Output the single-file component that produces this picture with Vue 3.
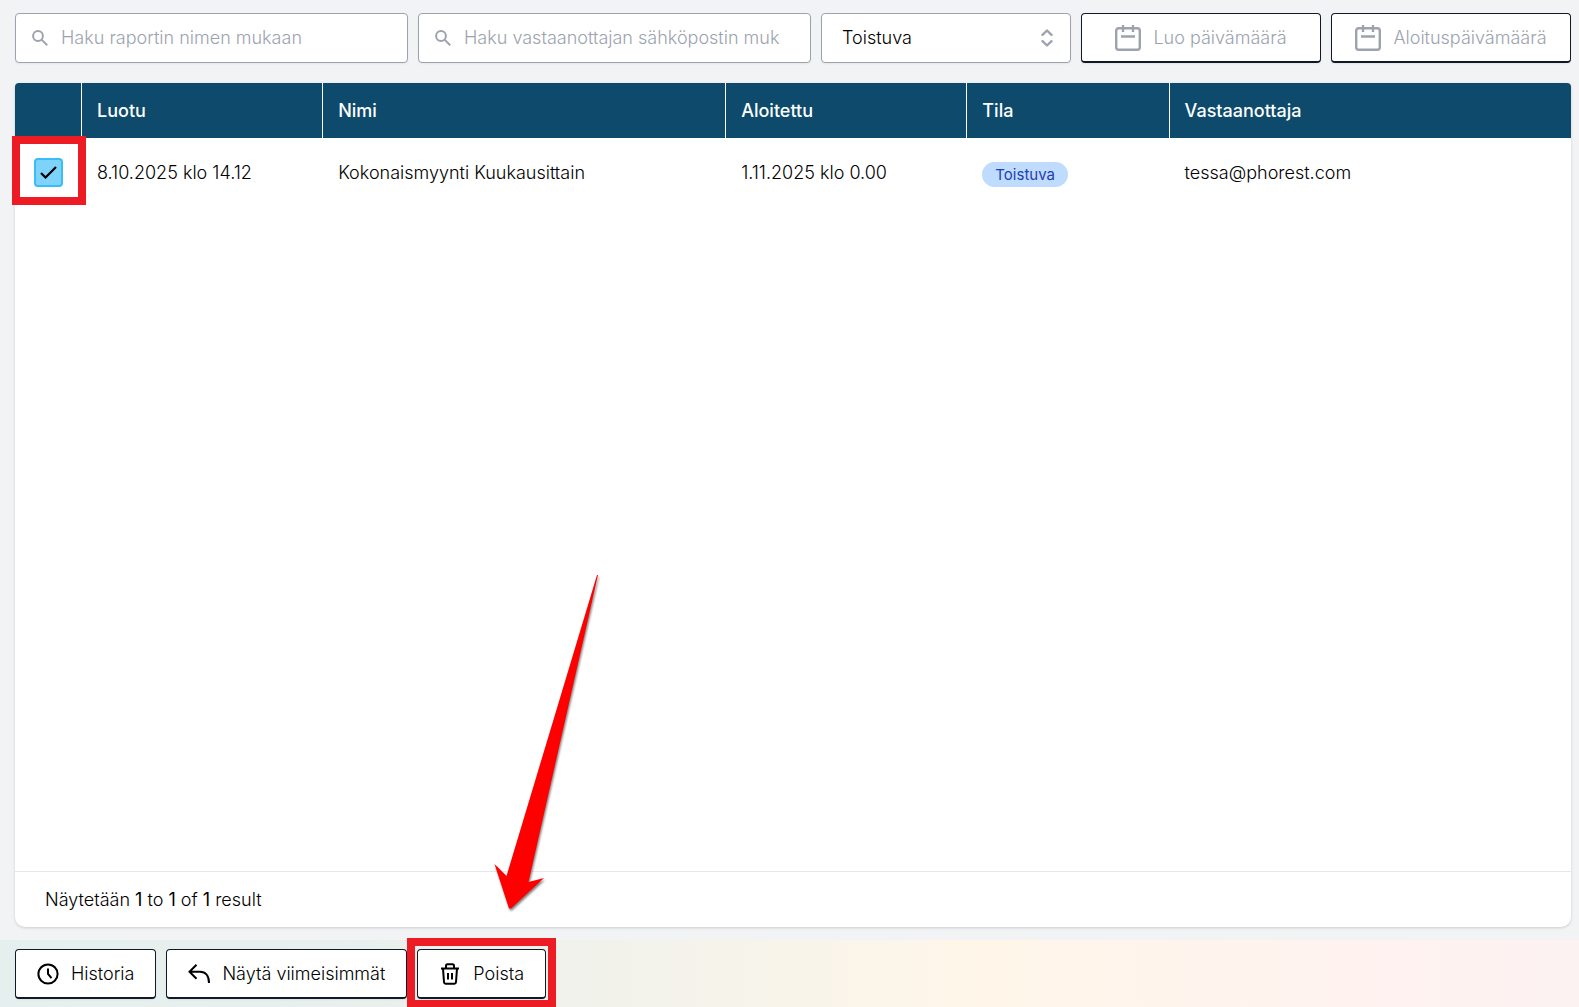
<script setup>
import { ref } from 'vue'

const nameQuery = ref('')
const emailQuery = ref('')
const status = ref('Toistuva')
const columns = ['Luotu', 'Nimi', 'Aloitettu', 'Tila', 'Vastaanottaja']
const rows = ref([
  {
    selected: true,
    created: '8.10.2025 klo 14.12',
    name: 'Kokonaismyynti Kuukausittain',
    started: '1.11.2025 klo 0.00',
    status: 'Toistuva',
    recipient: 'tessa@phorest.com',
  },
])
</script>

<template>
  <div class="page">
    <main class="content">
      <form class="filters" @submit.prevent>
        <label class="search">
          <svg class="search-icon" viewBox="0 0 16 16" aria-hidden="true">
            <circle cx="6" cy="6" r="4.9" />
            <path d="M9.6 9.6 15.2 15.2" />
          </svg>
          <input v-model="nameQuery" class="field" type="text" aria-label="Raportin nimi" placeholder="Haku raportin nimen mukaan" />
        </label>
        <label class="search">
          <svg class="search-icon" viewBox="0 0 16 16" aria-hidden="true">
            <circle cx="6" cy="6" r="4.9" />
            <path d="M9.6 9.6 15.2 15.2" />
          </svg>
          <input v-model="emailQuery" class="field" type="text" aria-label="Vastaanottajan sähköposti" placeholder="Haku vastaanottajan sähköpostin muk" />
        </label>
        <label class="select-wrap">
          <select v-model="status" class="field select" aria-label="Tila">
            <option>Toistuva</option>
          </select>
          <svg class="select-icon" viewBox="0 0 12 18" aria-hidden="true">
            <path d="M1.5 5.800 6 1.500l4.500 4.300M1.500 12.200 6 16.500l4.500-4.300" />
          </svg>
        </label>
        <button v-for="label in ['Luo päivämäärä', 'Aloituspäivämäärä']" :key="label" type="button" class="btn date">
          <svg class="calendar" viewBox="0 0 26 26" aria-hidden="true">
            <rect x="1.200" y="3.200" width="23.600" height="21.600" rx="2.500" />
            <path d="M8 0v7M18 0v7M6 11.500h14" />
          </svg>
          {{ label }}
        </button>
      </form>

      <section class="card">
        <table class="table">
          <thead>
            <tr>
              <th class="c-check"></th>
              <th v-for="(c, i) in columns" :key="c" :class="'c-' + i" scope="col">{{ c }}</th>
            </tr>
          </thead>
          <tbody>
            <tr v-for="row in rows" :key="row.name">
              <td class="check-cell">
                <span class="check">
                  <input v-model="row.selected" type="checkbox" :aria-label="row.name" />
                  <svg class="tick" viewBox="0 0 17 13" aria-hidden="true"><path d="M1 7 5.500 11.500 16 1" /></svg>
                  <span class="frame frame-check"></span>
                </span>
              </td>
              <td>{{ row.created }}</td>
              <td>{{ row.name }}</td>
              <td>{{ row.started }}</td>
              <td><span class="badge">{{ row.status }}</span></td>
              <td>{{ row.recipient }}</td>
            </tr>
          </tbody>
        </table>
        <p class="summary">Näytetään <b>1</b> to <b>1</b> of <b>1</b> result</p>
      </section>
    </main>

    <footer class="actions">
      <button type="button" class="btn">
        <svg class="icon" viewBox="0 0 22 22" aria-hidden="true">
          <circle cx="11" cy="11" r="9.600" />
          <path d="M11 5.500V11l3.500 4.200" />
        </svg>
        Historia
      </button>
      <button type="button" class="btn">
        <svg class="icon" viewBox="0 0 22 22" aria-hidden="true">
          <path d="M8.500 1.800 1.500 8.800l7 7M1.500 8.800H12c5.500 0 9 4 9 11.200" />
        </svg>
        Näytä viimeisimmät
      </button>
      <span class="marked">
        <button type="button" class="btn">
          <svg class="icon" viewBox="0 0 22 22" aria-hidden="true">
            <path d="M2 5.500h18M7 5V2.800C7 1.800 7.600 1.300 8.500 1.300h5c.9 0 1.500.5 1.500 1.500V5M4 5.500l1 13.700c.1.900.7 1.500 1.600 1.500h8.800c.9 0 1.500-.6 1.600-1.500L18 5.500M9 10v6.500M13 10v6.500" />
          </svg>
          Poista
        </button>
        <span class="frame frame-delete"></span>
        <svg class="arrow" viewBox="0 0 112 345" aria-hidden="true">
          <path d="M107 5h1L38.500 312 54 308 21 338.500h-2L4.500 294l12 12z" />
        </svg>
      </span>
    </footer>
  </div>
</template>

<style>
body {
  margin: 0;
}
</style>

<style scoped>
.page {
  display: flex;
  flex-direction: column;
  min-height: 100vh;
  overflow: clip;
  background: #f2f3f5;
  color: #000;
  font: 300 18px/28px Inter, "Liberation Sans", sans-serif;
  font-variant-ligatures: none;
}

.page *,
.page {
  box-sizing: border-box;
}

.content {
  flex: 1;
  display: flex;
  flex-direction: column;
  gap: 20px;
  padding: 13px 8px 13px 15px;
}

.filters {
  display: flex;
  gap: 10px;
}

.search {
  position: relative;
  flex: 1;
  min-width: 0;
}

.search-icon {
  position: absolute;
  left: 17px;
  top: 17px;
  width: 16px;
  height: 16px;
  fill: none;
  stroke: #9ca3af;
  stroke-width: 2;
}

.field {
  display: block;
  width: 100%;
  height: 50px;
  padding: 0 30px 2px 45px;
  border: 1px solid #9ca3af;
  border-radius: 4px;
  background: #fff;
  box-shadow: 0 1px 2px rgba(0, 0, 0, 0.06);
  color: #000;
  font: inherit;
  font-variant-ligatures: none;
}

.field::placeholder {
  color: #9ca3af;
  opacity: 1;
}

.select-wrap {
  position: relative;
  flex: 0 0 250px;
}

.select {
  appearance: none;
  padding: 0 40px 0 20px;
}

.select-icon {
  position: absolute;
  right: 18px;
  top: 16px;
  width: 12px;
  height: 18px;
  fill: none;
  stroke: #9ca3af;
  stroke-width: 2.4;
  stroke-linecap: round;
  stroke-linejoin: round;
  pointer-events: none;
}

.btn {
  display: flex;
  align-items: center;
  justify-content: center;
  gap: 12px;
  height: 50px;
  padding: 0 21px;
  border: 1px solid #111827;
  border-bottom-width: 2px;
  border-radius: 4px;
  background: #fff;
  box-shadow: 0 1px 2px rgba(0, 0, 0, 0.06);
  color: #000;
  font: inherit;
  font-weight: 350;
  font-variant-ligatures: none;
  white-space: nowrap;
}

.date {
  flex: 0 0 240px;
  color: #9ca3af;
}

.calendar {
  width: 26px;
  height: 26px;
  fill: none;
  stroke: #9ca3af;
  stroke-width: 2.4;
}

.card {
  flex: 1;
  display: flex;
  flex-direction: column;
  border-radius: 4px 4px 10px 10px;
  background: #fff;
  box-shadow: 0 1px 3px rgba(0, 0, 0, 0.16);
}

.table {
  width: 100%;
  table-layout: fixed;
  border-collapse: separate;
  border-spacing: 0;
}

.table th {
  height: 55px;
  padding: 0 15px;
  border-right: 1px solid #fff;
  background: #0d4a6b;
  color: #fff;
  font-weight: 500;
  text-align: left;
}

.table th:first-child {
  border-top-left-radius: 4px;
}

.table th:last-child {
  border-right: 0;
  border-top-right-radius: 4px;
}

.c-check {
  width: 67px;
}

.c-0,
.c-2 {
  width: 15.5%;
}

.c-1 {
  width: 25.9%;
}

.c-3 {
  width: 13%;
}

.table td {
  height: 70px;
  padding: 0 15px;
}

.table .check-cell {
  padding: 0 0 2px 19px;
}

.check {
  position: relative;
  display: block;
  width: 29px;
  height: 29px;
}

.check input {
  appearance: none;
  display: block;
  width: 29px;
  height: 29px;
  margin: 0;
  border: 2px solid #38bdf8;
  border-radius: 4px;
  background: #7dd3fc;
}

.tick {
  position: absolute;
  left: 6px;
  top: 8px;
  width: 17px;
  height: 13px;
  fill: none;
  stroke: #000;
  stroke-width: 2.2;
  pointer-events: none;
}

.frame {
  position: absolute;
  border: 8px solid #ed1c24;
  pointer-events: none;
}

.frame-check {
  inset: -22px -23px -18px -22px;
}

.frame-delete {
  inset: -11px -10px -9px -10px;
}

.badge {
  display: inline-block;
  margin-top: 2px;
  padding: 0 13px;
  border-radius: 13px;
  background: #bfdbfe;
  color: #1e40af;
  font-size: 15px;
  font-weight: 400;
  line-height: 25px;
  vertical-align: middle;
}

.summary {
  margin: auto 0 0;
  padding: 14px 30px 13px;
  border-top: 1px solid #e5e7eb;
}

.summary b {
  font-weight: 400;
}

.actions {
  display: flex;
  gap: 10px;
  padding: 9px 15px 8px;
  background: linear-gradient(90deg, #e5f0ee 0%, #e8efec 22%, #fff6e9 62%, #fff2f0 88%, #fcf2f1 100%);
}

.marked {
  position: relative;
}

.icon {
  width: 22px;
  height: 22px;
  fill: none;
  stroke: #000;
  stroke-width: 2;
}

.arrow {
  position: absolute;
  left: 73px;
  bottom: 84px;
  width: 112px;
  height: 345px;
  fill: #f00;
  filter: drop-shadow(1px 2px 1px rgba(0, 0, 0, 0.5));
  pointer-events: none;
}
</style>
